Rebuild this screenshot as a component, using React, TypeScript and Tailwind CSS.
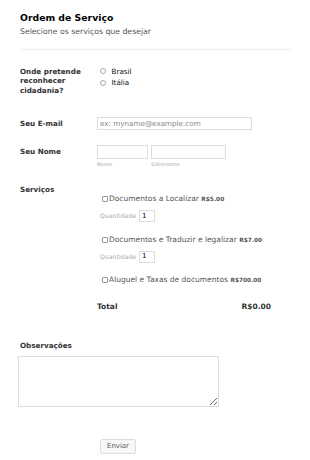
import React from "react";

const items = [
  { label: "Documentos a Localizar", price: "R$5.00", qty: true },
  { label: "Documentos e Traduzir e legalizar", price: "R$7.00", qty: true },
  { label: "Aluguel e Taxas de documentos", price: "R$700.00", qty: false },
];

function Radio({ label }: { label: string }) {
  return (
    <label className="flex items-center leading-[11.7px]">
      <span className="ml-[3px] mr-[5.5px] inline-block h-[6px] w-[6px] rounded-full border border-[#aaa] bg-white" />
      <span className="text-[7.2px] text-[#111]">{label}</span>
    </label>
  );
}

export default function App() {
  return (
    <div className="min-h-[460px] bg-white pl-[20px] pt-[12px] font-['DejaVu_Sans',sans-serif]">
      <h1 className="text-[9.3px] font-bold leading-[11px] text-black">Ordem de Serviço</h1>
      <p className="mt-[3.5px] text-[7.75px] leading-[10px] text-[#555]">
        Selecione os serviços que desejar
      </p>
      <div className="mt-[12.5px] w-[272px] border-t border-[#eee]" />

      {/* cidadania */}
      <div className="mt-[17px] grid grid-cols-[77px_1fr]">
        <div className="w-[66px] text-[7.2px] font-bold leading-[9.3px] text-[#333]">
          Onde pretende reconhecer cidadania?
        </div>
        <div className="-mt-[1.5px]">
          <Radio label="Brasil" />
          <Radio label="Itália" />
        </div>
      </div>

      {/* email */}
      <div className="mt-[22px] grid grid-cols-[77px_1fr] items-center">
        <div className="text-[7.2px] font-bold leading-[9px] text-[#333]">Seu E-mail</div>
        <input
          className="h-[13px] w-[155px] border border-[#ddd] px-[2px] text-[7.2px] text-[#555] outline-none placeholder:text-[#888]"
          placeholder="ex: myname@example.com"
        />
      </div>

      {/* nome */}
      <div className="mt-[15.5px] grid grid-cols-[77px_1fr]">
        <div className="pt-[2px] text-[7.2px] font-bold leading-[9px] text-[#333]">Seu Nome</div>
        <div className="flex gap-[3px]">
          <div className="flex flex-col">
            <input className="h-[13.3px] w-[51px] border border-[#ddd] outline-none" />
            <span className="mt-[2px] text-[5px] leading-[6px] text-[#aaa]">Nome</span>
          </div>
          <div className="flex flex-col">
            <input className="h-[13.3px] w-[75px] border border-[#ddd] outline-none" />
            <span className="mt-[2px] text-[5px] leading-[6px] text-[#aaa]">Sobrenome</span>
          </div>
        </div>
      </div>

      {/* serviços */}
      <div className="mt-[18px] grid grid-cols-[77px_1fr]">
        <div className="text-[7.2px] font-bold leading-[9px] text-[#333]">Serviços</div>
        <div className="pt-[9px]">
          {items.map((it, i) => (
            <div key={it.label} className={i === 0 ? "" : i === 1 ? "mt-[13.5px]" : "mt-[12.5px]"}>
              <div className="flex items-center pl-[5px] leading-[10px]">
                <span className="mr-[1px] inline-block h-[6px] w-[6px] rounded-[1px] border border-[#999] bg-white" />
                <span className="text-[7.5px] text-[#555]">{it.label}</span>
                <span className="ml-[2.5px] text-[5.8px] font-bold text-[#555]">{it.price}</span>
              </div>
              {it.qty && (
                <div className={`flex items-center pl-[3px] ${i === 0 ? "mt-[6.5px]" : "mt-[5.5px]"}`}>
                  <span className="mr-[3px] text-[6.2px] text-[#aaa]">Quantidade</span>
                  <div className="flex h-[11.7px] w-[16px] items-center border border-[#ddd] pl-[2px] text-[7px] text-black">
                    1
                  </div>
                </div>
              )}
            </div>
          ))}
          <div className="mt-[17px] flex w-[174px] justify-between text-[7.5px] font-bold leading-[10px] text-[#333]">
            <span>Total</span>
            <span>R$0.00</span>
          </div>
        </div>
      </div>

      {/* observações */}
      <div className="mt-[29px] text-[7.2px] font-bold leading-[9px] text-[#333]">Observações</div>
      <textarea className="-ml-[1.7px] mt-[5.5px] block h-[51.7px] w-[200.7px] border border-[#ddd] outline-none" />

      <div className="mt-[24px] pl-[80px]">
        <button className="h-[15.6px] w-[36px] rounded-[2px] border border-[#ddd] bg-[#f7f7f7] text-[6.9px] text-[#555]">
          Enviar
        </button>
      </div>
    </div>
  );
}
